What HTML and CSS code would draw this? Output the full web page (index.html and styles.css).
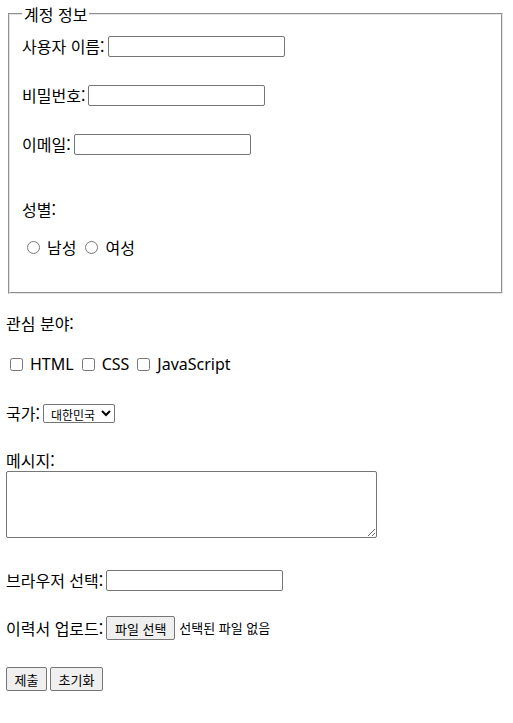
FILE: index.html
```html
<!DOCTYPE html>
<html lang="ko">
<head>
<meta charset="utf-8">
<title>회원 정보 입력</title>
<link rel="stylesheet" href="styles.css">
</head>
<body>
<form class="form">
  <fieldset class="account">
    <legend class="legend">계정 정보</legend>
    <div class="row row-first"><label class="lbl" for="username">사용자 이름:</label><input class="text" type="text" id="username"></div>
    <div class="row row-next"><label class="lbl" for="password">비밀번호:</label><input class="text" type="password" id="password"></div>
    <div class="row row-next"><label class="lbl" for="email">이메일:</label><input class="text" type="email" id="email"></div>
    <div class="row row-gender">성별:</div>
    <div class="row row-radios">
      <input class="radio" type="radio" name="gender" id="male"><label class="opt" for="male">남성</label>
      <input class="radio" type="radio" name="gender" id="female"><label class="opt" for="female">여성</label>
    </div>
  </fieldset>

  <div class="row row-interest">관심 분야:</div>
  <div class="row row-checks">
    <input class="check" type="checkbox" id="html"><label class="opt latin" for="html">HTML</label>
    <input class="check" type="checkbox" id="css"><label class="opt latin" for="css">CSS</label>
    <input class="check" type="checkbox" id="js"><label class="opt latin" for="js">JavaScript</label>
  </div>

  <div class="row row-country"><label class="lbl" for="country">국가:</label>
    <select class="select" id="country"><option>대한민국</option></select>
  </div>

  <div class="row row-msg"><label for="message">메시지:</label></div>
  <textarea class="area" id="message"></textarea>

  <div class="row row-browser"><label class="lbl" for="browser">브라우저 선택:</label><input class="text" type="text" id="browser"></div>

  <div class="row row-file"><span class="lbl">이력서 업로드:</span><button type="button" class="btn file-btn">파일 선택</button><span class="file-none">선택된 파일 없음</span></div>

  <div class="row row-buttons"><button type="submit" class="btn submit-btn">제출</button><button type="reset" class="btn reset-btn">초기화</button></div>
</form>
</body>
</html>
```

FILE: styles.css
```css
html {
  background: #ffffff;
}

body {
  margin: 2px 8px 8px 6px;
  font-family: "Noto Sans CJK KR", "Noto Sans", sans-serif;
  font-size: 16px;
  color: #000000;
}

.form {
  margin: 0;
}

.account {
  margin: 0 2px;
  padding: 0 12px 33px;
  border: 2px groove #e4e4e4;
  min-width: 0;
}

.legend {
  padding: 0 2px;
  height: 24px;
  line-height: 24px;
}

.row {
  display: flex;
  align-items: center;
  height: 24px;
  line-height: 24px;
  white-space: nowrap;
}

.row-first { margin-top: 8px; }
.row-next { margin-top: 25px; }
.row-gender { margin-top: 41px; }
.row-radios { margin-top: 14px; }
.row-interest { margin-top: 17px; }
.row-checks { margin-top: 17px; }
.row-country { margin-top: 25px; }
.row-msg { margin-top: 24px; height: 22px; line-height: 22px; }
.row-browser { margin-top: 30px; }
.row-file { margin-top: 24px; }
.row-buttons { margin-top: 27px; }

.lbl {
  margin-right: 3px;
}

.text {
  box-sizing: border-box;
  width: 177px;
  height: 21px;
  margin: 0;
  padding: 1px 2px;
  border: 1px solid #767676;
  border-radius: 2px;
  background: #ffffff;
  font-size: 13px;
}

.radio {
  width: 13px;
  height: 13px;
  margin: 0 3px 0 5px;
}

.check {
  width: 13px;
  height: 13px;
  margin: 0 3px 0 4px;
}

.opt {
  padding-left: 4px;
  margin-right: 4px;
}

.latin {
  font-family: "Noto Sans", sans-serif;
  font-size: 16px;
}

.select {
  box-sizing: border-box;
  width: 72px;
  height: 19px;
  margin: 0;
  padding: 0 0 0 3px;
  border: 1px solid #767676;
  border-radius: 2px;
  background: #ffffff;
  font-family: "Noto Sans CJK KR", sans-serif;
  font-size: 12px;
  color: #000000;
}

.area {
  display: block;
  box-sizing: border-box;
  width: 371px;
  height: 67px;
  margin: 0;
  border: 1px solid #767676;
  border-radius: 2px;
}

.btn {
  box-sizing: border-box;
  height: 24px;
  margin: 0;
  padding: 0 4px;
  border: 1px solid #767676;
  border-radius: 2px;
  background: #efefef;
  font-family: "Noto Sans CJK KR", sans-serif;
  font-size: 13px;
  color: #000000;
}

.file-btn {
  width: 69px;
}

.file-none {
  margin-left: 4px;
  font-size: 13px;
}

.submit-btn {
  width: 41px;
}

.reset-btn {
  width: 53px;
  margin-left: 3px;
}
```
